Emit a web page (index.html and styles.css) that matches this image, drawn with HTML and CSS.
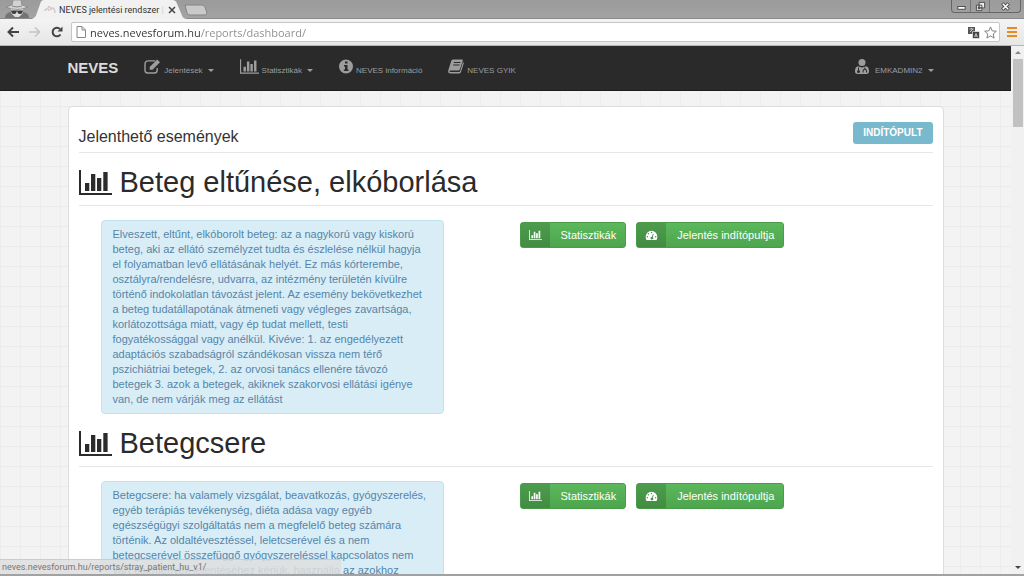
FILE: index.html
```
<!DOCTYPE html>
<html lang="hu">
<head>
  <meta charset="UTF-8" />
  <meta name="viewport" content="width=device-width, initial-scale=1" />
  <title>NEVES jelentési rendszer</title>
  <link rel="stylesheet" href="styles.css">
</head>
<body>
  <!-- icon set -->
  <svg class="sprite" aria-hidden="true">
    <symbol id="i-chart" viewBox="0 0 33 25">
      <path d="M0 0h2v23h31v2H0z M6 13h4.300v8H6z M12 4h4.300v17H12z M18 8h4.300v13H18z M24.300 2h4.300v19h-4.300z"/>
    </symbol>
    <symbol id="i-edit" viewBox="0 0 18 16">
      <path d="M12 2H4a3 3 0 0 0-3 3v7a3 3 0 0 0 3 3h7a3 3 0 0 0 3-3V9.500" fill="none" stroke="currentColor" stroke-width="1.500"/>
      <path d="M6 8.500 14 .5l3 3-8 8H6z"/>
    </symbol>
    <symbol id="i-info" viewBox="0 0 14 14">
      <path fill-rule="evenodd" d="M7 0a7 7 0 1 0 0 14A7 7 0 0 0 7 0zM6 2h2.500v2H6zM5 5.500h3.500V10H9.500v1.500H4.800V10H6V7H5z"/>
    </symbol>
    <symbol id="i-book" viewBox="0 0 16 14">
      <path fill-rule="evenodd" d="M5 0h9q1.200 0 .8 1.200L12 9.500Q11.600 11 10.200 11H2.200q-1 0-.8.8.2.700 1.200.7H11q.8 0 1.100-.8L15 2.500q1 .5.700 1.500L13 12.500Q12.500 14 11 14H2.500Q0 14 .1 11.500L3.200 1.500Q3.700 0 5 0zM6 2.500 5.700 3.500h6.500L12.500 2.500zM5.300 5 5 6h6.500l.3-1z"/>
    </symbol>
    <symbol id="i-doctor" viewBox="0 0 14 15">
      <circle cx="7" cy="3.500" r="3.500"/>
      <path fill-rule="evenodd" d="M3 7.300q-3 .7-3 5Q0 15 2.500 15h9Q14 15 14 12.300q0-4.300-3-5Q7 9.500 3 7.300zM3 8.500h1v2.700q1 .3 1 1.300a1.500 1.500 0 1 1-2-1.300zM9.300 8.500h1v1.300q1.700.4 1.700 2v1.700h-1v-1.700q0-1-1.200-1t-1.200 1v1.700h-1v-1.700q0-1.600 1.700-2z"/>
    </symbol>
    <symbol id="i-dash" viewBox="0 0 14 12">
      <path fill-rule="evenodd" d="M7 1a7 7 0 0 0-7 7q0 2 1 4h12q1-2 1-4a7 7 0 0 0-7-7zM7 2.200a.9.900 0 1 1 0 1.800.9.900 0 0 1 0-1.800zM3.300 3.600a.9.900 0 1 1 0 1.800.9.900 0 0 1 0-1.800zM2 7.200A.9.900 0 1 1 2 9a.9.900 0 0 1 0-1.800zM12 7.200A.9.900 0 1 1 12 9a.9.900 0 0 1 0-1.800zM8.800 4.500l.9.200-1.200 3.600a1.600 1.600 0 1 1-1-.3z"/>
    </symbol>
  </svg>

  <header class="browser">
    <div class="tabs">
      <svg class="incognito" viewBox="0 0 26 18" aria-hidden="true">
        <path d="M1 18q0-5 6-6l6 4 6-4q6 1 6 6z" fill="#747474"/>
        <path d="M7 8h12v5l-4 4h-4l-4-4z" fill="#dedede"/>
        <path d="M8 5 9 0h8l1 5 6 2q-11 5-22 0z" fill="#d2d2d2" stroke="#777" stroke-width=".6"/>
        <path d="M8 6q5 2 10 0" fill="none" stroke="#888"/>
        <path d="M7 10.500h12q-.5 3.500-3 3.500t-2.500-2.500h-1Q12.500 14 10 14t-3-3.500z" fill="#3c3c3c"/>
      </svg>
      <div class="tab">
        <svg class="tab-shape" viewBox="0 0 160 18" preserveAspectRatio="none" aria-hidden="true">
          <path d="M0 18Q3 17 4 15L9 2q1-2 3-2h132q3 0 4 2l6 13q1 3 6 3z"/>
        </svg>
        <svg class="favicon" viewBox="0 0 12 10" aria-hidden="true">
          <path d="M1 6q0-2 2-2t2 2M4 3q1-2 2-1t1 3M7 4q2-2 3 0t1 4" fill="none" stroke="#d3c9c6" stroke-width="1.500"/>
        </svg>
        <span class="tab-title">NEVES jelentési rendszer <i>|</i></span>
        <button class="tab-close" aria-label="Lap bezárása">
          <svg viewBox="0 0 8 8"><path d="M1 1l6 6M7 1 1 7" stroke="#444" stroke-width="1.500"/></svg>
        </button>
      </div>
      <button class="tab-new" aria-label="Új lap">
        <svg viewBox="0 0 24 12"><path d="M1 1h17q2 0 3 2l2 6q0 2-2 2H6q-2 0-3-2z" fill="#c9c9c9" stroke="#858585"/></svg>
      </button>
      <div class="window-buttons">
        <button aria-label="Kis méret"><svg viewBox="0 0 12 12"><rect x="2" y="6" width="8" height="3" fill="#fff" stroke="#444"/></svg></button>
        <button aria-label="Előző méret"><svg viewBox="0 0 12 12"><path d="M4.500 1.500h6v6h-6zM1.500 4.500h6v6h-6z" fill="#eee" stroke="#444"/><path d="M3.500 6.500h2v2h-2z" fill="#777" stroke="#444"/></svg></button>
        <button class="wide" aria-label="Bezárás"><svg viewBox="0 0 12 12"><path d="M2.500 2.500l7 7M9.500 2.500l-7 7" stroke="#444" stroke-width="3.500"/><path d="M3 3l6 6M9 3 3 9" stroke="#fff" stroke-width="1.800"/></svg></button>
      </div>
    </div>
    <div class="toolbar">
      <button aria-label="Vissza"><svg viewBox="0 0 12 12"><path d="M12 6H2M6 1.500 1.500 6 6 10.500" fill="none" stroke="#444" stroke-width="2"/></svg></button>
      <button aria-label="Előre"><svg viewBox="0 0 12 12"><path d="M0 6h10M6 1.500 10.500 6 6 10.500" fill="none" stroke="#c4c4c4" stroke-width="1.600"/></svg></button>
      <button aria-label="Újratöltés"><svg viewBox="0 0 12 12"><path d="M9.500 8.500A4.300 4.300 0 1 1 9 3" fill="none" stroke="#444" stroke-width="2"/><path d="M11.500.5v5h-5z" fill="#444"/></svg></button>
      <div class="address">
        <svg viewBox="0 0 10 12" class="page-icon" aria-hidden="true"><path d="M1 .5h5L9.500 4v7.500H1zM6 .5V4h3.500" fill="#fff" stroke="#888"/></svg>
        <input type="text" class="url" aria-label="Cím" value="neves.nevesforum.hu/reports/dashboard/">
        <button aria-label="Fordítás"><svg viewBox="0 0 13 13"><path d="M1 1h7v7H1z" fill="#555"/><path d="M5.500 5.500h7v7h-7z" fill="#444" stroke="#fff" stroke-width=".6"/><path d="M2.500 3h4M4.500 2v1M3 6l3-3M7.500 11 9 7.500l1.500 3.500M8 10h2" fill="none" stroke="#ddd" stroke-width=".8"/></svg></button>
        <button aria-label="Könyvjelző"><svg viewBox="0 0 14 14"><path d="M7 1l1.800 4.200 4.500.4-3.400 3 1 4.400L7 10.700 3.100 13l1-4.400-3.400-3 4.500-.4z" fill="#fff" stroke="#777"/></svg></button>
      </div>
      <button class="menu" aria-label="Menü"><svg viewBox="0 0 12 12"><path d="M1 2h10M1 6h10M1 10h10" stroke="#e98b1e" stroke-width="2"/></svg></button>
    </div>
  </header>

  <div class="viewport">
    <div class="page">
      <nav class="navbar">
        <div class="container nav-row">
          <a href="#" class="brand">NEVES</a>
          <button class="nav-item"><svg class="ico-edit"><use href="#i-edit"/></svg>Jelentések<span class="caret"></span></button>
          <button class="nav-item"><svg class="ico-chart"><use href="#i-chart"/></svg>Statisztikák<span class="caret"></span></button>
          <a href="#" class="nav-item"><svg class="ico-info"><use href="#i-info"/></svg>NEVES információ</a>
          <a href="#" class="nav-item"><svg class="ico-book"><use href="#i-book"/></svg>NEVES GYIK</a>
          <button class="nav-item user"><svg class="ico-doctor"><use href="#i-doctor"/></svg>EMKADMIN2<span class="caret"></span></button>
        </div>
      </nav>

      <main class="container card">
        <div class="card-head">
          <h4>Jelenthető események</h4>
          <a href="#" class="btn-info">INDÍTÓPULT</a>
        </div>

        <section>
          <h1><svg><use href="#i-chart"/></svg>Beteg eltűnése, elkóborlása</h1>
          <div class="row">
            <p class="alert">Elveszett, eltűnt, elkóborolt beteg: az a nagykorú vagy kiskorú beteg, aki az ellátó személyzet tudta és észlelése nélkül hagyja el folyamatban levő ellátásának helyét. Ez más kórterembe, osztályra/rendelésre, udvarra, az intézmény területén kívülre történő indokolatlan távozást jelent. Az esemény bekövetkezhet a beteg tudatállapotának átmeneti vagy végleges zavartsága, korlátozottsága miatt, vagy ép tudat mellett, testi fogyatékossággal vagy anélkül. Kivéve: 1. az engedélyezett adaptációs szabadságról szándékosan vissza nem térő pszichiátriai betegek, 2. az orvosi tanács ellenére távozó betegek 3. azok a betegek, akiknek szakorvosi ellátási igénye van, de nem várják meg az ellátást</p>
            <div class="actions">
              <a href="#" class="btn"><span class="btn-label"><svg><use href="#i-chart"/></svg></span>Statisztikák</a>
              <a href="#" class="btn"><span class="btn-label"><svg><use href="#i-dash"/></svg></span>Jelentés indítópultja</a>
            </div>
          </div>
        </section>

        <section>
          <h1><svg><use href="#i-chart"/></svg>Betegcsere</h1>
          <div class="row">
            <p class="alert">Betegcsere: ha valamely vizsgálat, beavatkozás, gyógyszerelés, egyéb terápiás tevékenység, diéta adása vagy egyéb egészségügyi szolgáltatás nem a megfelelő beteg számára történik. Az oldaltévesztéssel, leletcserével és a nem betegcserével összefüggő gyógyszereléssel kapcsolatos nem várt események jelentéséhez kérjük, használja az azokhoz</p>
            <div class="actions">
              <a href="#" class="btn"><span class="btn-label"><svg><use href="#i-chart"/></svg></span>Statisztikák</a>
              <a href="#" class="btn"><span class="btn-label"><svg><use href="#i-dash"/></svg></span>Jelentés indítópultja</a>
            </div>
          </div>
        </section>
      </main>
    </div>

    <div class="scrollbar">
      <span class="arrow up"></span>
      <span class="thumb"></span>
      <span class="arrow down"></span>
    </div>
    <div class="status">neves.nevesforum.hu/reports/stray_patient_hu_v1/</div>
  </div>
</body>
</html>
```
FILE: styles.css
```
* {
  box-sizing: border-box;
}
body {
  margin: 0;
  height: 100vh;
  display: flex;
  flex-direction: column;
  overflow: hidden;
  font-family: "Liberation Sans", Arial, sans-serif;
  color: #333;
  border-bottom: 2px solid #a0a2a4;
}
svg {
  display: block;
  fill: currentColor;
  flex: none;
}
button {
  background: none;
  border: 0;
  padding: 0;
  font: inherit;
  color: inherit;
  cursor: pointer;
}
a {
  text-decoration: none;
}
.sprite {
  position: absolute;
  width: 0;
  height: 0;
}

/* browser window */
.browser {
  flex: none;
  font-family: Roboto, "Open Sans", sans-serif;
}
.tabs {
  display: flex;
  height: 19px;
  background: linear-gradient(#9b9b9b, #a3a3a3);
  border-bottom: 1px solid #8a8a8a;
}
.incognito {
  width: 26px;
  height: 18px;
  margin-left: 4px;
}
.tab {
  position: relative;
  display: flex;
  align-items: center;
  width: 156px;
  height: 19px;
  margin-left: 2px;
  padding-left: 12px;
}
.tab-shape {
  position: absolute;
  left: 0;
  top: 0;
  width: 100%;
  height: 100%;
  fill: #f1f1f1;
}
.favicon {
  position: relative;
  width: 12px;
  height: 10px;
}
.tab-title {
  position: relative;
  width: 105px;
  margin-left: 3px;
  font-size: 9px;
  line-height: 12px;
  color: #333;
  white-space: nowrap;
}
.tab-title i {
  font-style: normal;
  color: #ccc;
}
.tab-close {
  position: relative;
  width: 8px;
  margin-left: 4px;
}
.tab-new {
  width: 24px;
  height: 12px;
  margin: 4px 0 0 -4px;
}
.window-buttons {
  display: flex;
  height: 13px;
  margin-left: auto;
  margin-right: 3px;
  border: 1px solid #666;
  border-top: 0;
  border-radius: 0 0 4px 4px;
}
.window-buttons button {
  width: 19px;
  display: flex;
  justify-content: center;
  align-items: center;
  border-right: 1px solid #777;
}
.window-buttons .wide {
  width: 30px;
  border-right: 0;
}
.window-buttons svg {
  width: 11px;
  height: 11px;
}
.toolbar {
  display: flex;
  align-items: center;
  gap: 10px;
  height: 27px;
  padding: 0 6px 0 7px;
  background: linear-gradient(#f3f3f3, #e6e6e6);
  border-bottom: 1px solid #b5b5b5;
}
.toolbar > button {
  width: 12px;
}
.toolbar .menu {
  margin-left: -4px;
}
.address {
  flex: 1;
  display: flex;
  align-items: center;
  gap: 4px;
  height: 20px;
  margin-left: -2px;
  padding: 0 2px 0 4px;
  background: #fff;
  border: 1px solid #c6c6c6;
  border-radius: 2px;
}
.address button {
  width: 13px;
}
.page-icon {
  width: 10px;
  height: 12px;
}
.url {
  flex: 1;
  min-width: 0;
  height: 18px;
  padding: 0;
  border: 0;
  outline: 0;
  font-family: "Open Sans", "Noto Sans", sans-serif;
  font-size: 11px;
  /* host part darker than the path */
  color: transparent;
  background: linear-gradient(90deg, #333 111px, #8c8c8c 111px);
  -webkit-background-clip: text;
  background-clip: text;
}

/* page */
.viewport {
  position: relative;
  flex: 1;
  min-height: 0;
  display: flex;
}
.page {
  flex: 1;
  overflow: hidden;
  background-color: #f3f3f3;
  background-image:
    linear-gradient(#ebebeb 1px, transparent 1px),
    linear-gradient(90deg, #ededed 1px, transparent 1px);
  background-size: 20px 20px;
}
.container {
  max-width: 876px;
  margin: 0 auto;
}
.navbar {
  background: #2a2a2a;
  border-bottom: 1px solid #1c1c1c;
}
.nav-row {
  display: flex;
  align-items: center;
  gap: 26px;
  height: 44px;
  padding-bottom: 2px;
}
.brand {
  font-size: 15px;
  font-weight: bold;
  color: #ddd;
}
.nav-item {
  display: flex;
  align-items: flex-end;
  gap: 3px;
  font-size: 8px;
  line-height: 10px;
  color: #9d9d9d;
}
.nav-item svg {
  height: 15px;
  margin-bottom: 2px;
}
.ico-edit {
  width: 17px;
}
.ico-chart {
  width: 19px;
}
.ico-info {
  width: 14px;
}
.ico-book {
  width: 16px;
}
.ico-doctor {
  width: 14px;
  margin-right: 3px;
}
.user {
  margin-left: auto;
  margin-right: 10px;
}
.caret {
  margin: 0 0 4px 2px;
  border: 3px solid transparent;
  border-top-color: currentColor;
  border-bottom: 0;
}
.card {
  margin-top: 15px;
  padding: 0 10px 20px;
  background: #fff;
  border: 1px solid #ddd;
  border-radius: 4px;
}
.card-head {
  display: flex;
  justify-content: space-between;
  align-items: flex-end;
  height: 46px;
  padding-bottom: 6px;
  border-bottom: 1px solid #e7e7e7;
}
h4 {
  margin: 0;
  font-size: 16px;
  font-weight: normal;
  line-height: 18px;
}
.btn-info {
  margin-bottom: 2px;
  padding: 0 10px;
  font-size: 10px;
  font-weight: bold;
  line-height: 22px;
  color: #fff;
  background: #78b9ce;
  border-radius: 3px;
}
h1 {
  display: flex;
  align-items: center;
  gap: 8px;
  height: 53px;
  margin: 0 0 14px;
  padding-top: 6px;
  font-size: 29px;
  font-weight: normal;
  line-height: 32px;
  color: #2b2b2b;
  border-bottom: 1px solid #e7e7e7;
}
h1 svg {
  width: 33px;
  height: 25px;
}
.row {
  display: flex;
  align-items: flex-start;
  gap: 76px;
  padding-left: 22px;
}
.alert {
  flex: 0 0 343px;
  margin: 0;
  padding: 6px 14px 6px 11px;
  font-size: 11px;
  line-height: 15px;
  color: #5585a8;
  background: #d9edf7;
  border: 1px solid #bfe4ee;
  border-radius: 4px;
}
.actions {
  display: flex;
  gap: 10px;
  padding-top: 2px;
}
.btn {
  display: flex;
  align-items: center;
  height: 26px;
  padding-right: 9px;
  font-size: 11px;
  color: #fff;
  background: linear-gradient(#5cb85c, #4da54d);
  border: 1px solid #4a9c4a;
  border-radius: 3px;
}
.btn-label {
  display: flex;
  align-items: center;
  align-self: stretch;
  margin-right: 11px;
  padding: 0 8px;
  background: rgba(0, 0, 0, 0.15);
}
.btn-label svg {
  width: 13px;
  height: 10px;
}

/* scrollbar and link hint */
.scrollbar {
  flex: 0 0 13px;
  display: flex;
  flex-direction: column;
  align-items: center;
  padding: 5px 0;
  background: #f1f1f1;
}
.arrow {
  border: 3px solid transparent;
}
.up {
  border-top: 0;
  border-bottom-color: #888;
}
.down {
  margin-top: auto;
  border-bottom: 0;
  border-top-color: #444;
}
.thumb {
  width: 10px;
  height: 68px;
  margin-top: 5px;
  background: #c1c1c1;
}
.status {
  position: absolute;
  left: 0;
  bottom: 0;
  width: 341px;
  height: 15px;
  padding-left: 2px;
  font-family: Roboto, "Open Sans", sans-serif;
  font-size: 9px;
  line-height: 15px;
  color: #777;
  background: rgba(222, 222, 222, 0.85);
  border-top: 1px solid #ccc;
  border-radius: 0 3px 0 0;
}
```
